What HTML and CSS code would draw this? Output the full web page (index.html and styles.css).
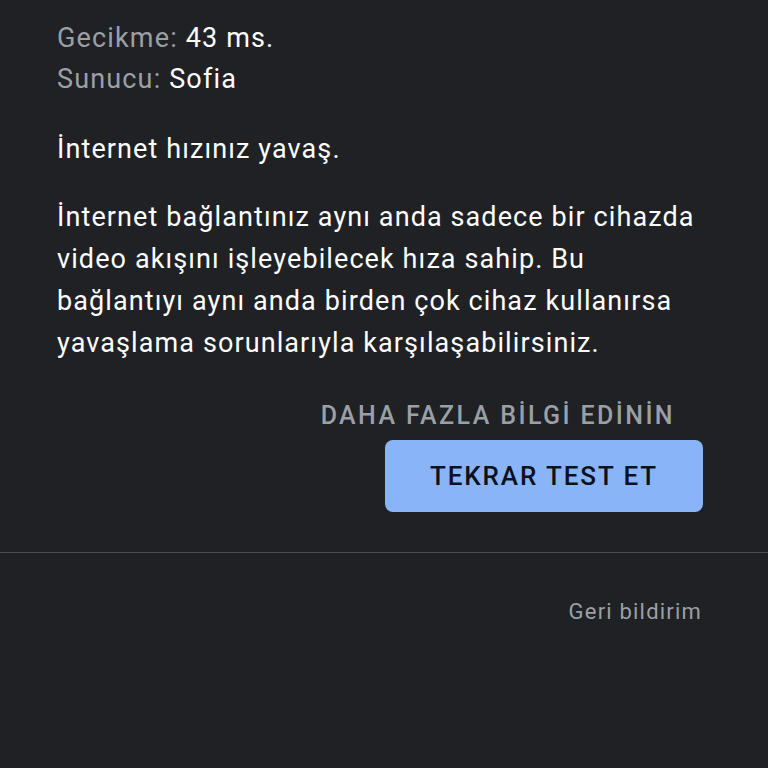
FILE: index.html
```html
<!DOCTYPE html>
<html lang="tr">
<head>
  <meta charset="UTF-8" />
  <meta name="viewport" content="width=device-width, initial-scale=1.0"/>
  <title>Hız testi sonucu</title>
  <link rel="stylesheet" href="styles.css">
</head>
<body>
  <div class="result">
    <div class="stats">
      <div class="stat"><span class="label">Gecikme:</span> 43 ms.</div>
      <div class="stat"><span class="label">Sunucu:</span> Sofia</div>
    </div>
    <p class="headline">İnternet hızınız yavaş.</p>
    <p class="desc">İnternet bağlantınız aynı anda sadece bir cihazda video akışını işleyebilecek hıza sahip. Bu bağlantıyı aynı anda birden çok cihaz kullanırsa yavaşlama sorunlarıyla karşılaşabilirsiniz.</p>
    <div class="actions">
      <a class="more-link">DAHA FAZLA BİLGİ EDİNİN</a>
      <button class="retest-btn">TEKRAR TEST ET</button>
    </div>
  </div>
  <div class="footer">
    <a class="feedback">Geri bildirim</a>
  </div>
</body>
</html>
```
FILE: styles.css
```css
body {
  margin: 0;
  padding: 0;
  background-color: #202124;
  color: #ffffff;
  font-family: Roboto, "Liberation Sans", sans-serif;
  height: 768px;
  overflow: hidden;
}

.result {
  padding: 18px 60px 40px 57px;
  border-bottom: 1px solid #4a4d51;
}

.stats {
  font-size: 27px;
  line-height: 41px;
  letter-spacing: 1.15px;
}

.label {
  color: #9aa0a6;
}

.headline,
.desc {
  font-size: 27px;
  line-height: 42px;
  letter-spacing: 1.1px;
}

.headline {
  margin: 28px 0 0;
}

.desc {
  margin: 26px 0 0;
  max-width: 652px;
}

.actions {
  display: flex;
  flex-direction: column;
  align-items: flex-end;
  margin-top: 37px;
}

.more-link {
  font-size: 25px;
  font-weight: 500;
  color: #9aa0a6;
  line-height: 30px;
  letter-spacing: 2.4px;
  margin-right: 33px;
}

.retest-btn {
  margin: 9px 5px 0 0;
  width: 318px;
  height: 72px;
  background-color: #8ab4f8;
  color: #0c1120;
  border: none;
  border-radius: 8px;
  font-family: Roboto, "Liberation Sans", sans-serif;
  font-size: 26px;
  font-weight: 500;
  letter-spacing: 1.9px;
  padding: 0;
}

.footer {
  display: flex;
  justify-content: flex-end;
  padding: 44px 66px 0 0;
}

.feedback {
  font-size: 22px;
  color: #9aa0a6;
  line-height: 30px;
  letter-spacing: 1.2px;
}
```
